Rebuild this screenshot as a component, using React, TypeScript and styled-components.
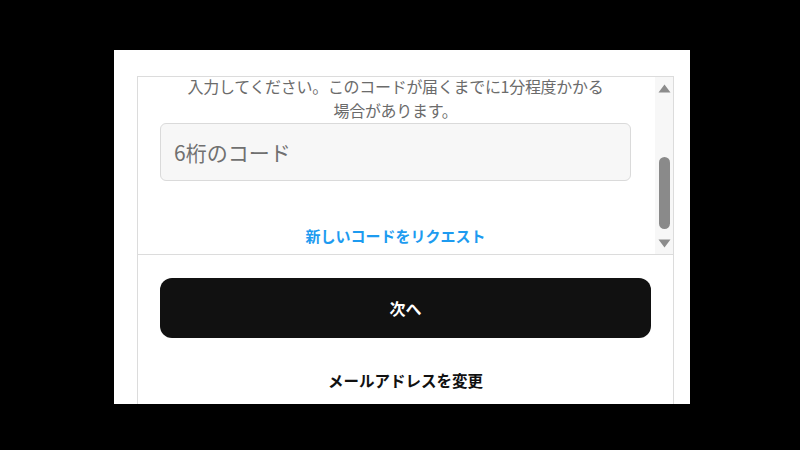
import React, { useLayoutEffect, useRef } from "react";
import styled, { createGlobalStyle } from "styled-components";

const Global = createGlobalStyle`
  html, body { margin: 0; padding: 0; background: #000; }
  body { font-family: "Noto Sans CJK JP", "Noto Sans", sans-serif; }
  * { box-sizing: border-box; }
`;

const Page = styled.div`
  width: 800px;
  height: 450px;
  background: #000;
  padding: 50px 0 0 114px;
  overflow: hidden;
`;

const Panel = styled.div`
  width: 576px;
  height: 354px;
  background: #fff;
  padding: 26px 16px 0 23px;
  display: flex;
  flex-direction: column;
  overflow: hidden;
`;

const Box = styled.div`
  flex: 1;
  border: 1px solid #dcdcdc;
  border-bottom: none;
  display: flex;
  flex-direction: column;
  min-height: 0;
`;

const ScrollRow = styled.div`
  height: 178px;
  flex: none;
  display: flex;
  border-bottom: 1px solid #dcdcdc;
`;

const Viewport = styled.div`
  position: relative;
  flex: 1;
  overflow: hidden;
`;

const Content = styled.div`
  padding: 120px 24px 12px 22px;
`;

const Description = styled.p`
  margin: 0 0 1px 0;
  font-size: 16px;
  line-height: 24px;
  color: #6b6b6b;
  text-align: center;
  letter-spacing: -0.3px;
`;

const Line = styled.span`
  display: block;
  white-space: nowrap;
`;

const CodeInput = styled.input`
  display: block;
  width: 100%;
  height: 58px;
  border: 1px solid #dadada;
  border-radius: 6px;
  background: #f7f7f7;
  padding: 0 13px;
  font-family: "Noto Sans CJK JP", "Noto Sans", sans-serif;
  font-size: 21px;
  color: #222;
  outline: none;
  &::placeholder { color: #707070; }
`;

const LinkRow = styled.div`
  padding-top: 42px;
  text-align: center;
`;

const TextLink = styled.a<{ $tone: "blue" | "dark" }>`
  font-size: ${(p) => (p.$tone === "blue" ? "15px" : "15.5px")};
  line-height: 24px;
  font-weight: 700;
  color: ${(p) => (p.$tone === "blue" ? "#1d9bf0" : "#111")};
  text-decoration: none;
  cursor: pointer;
`;

const ScrollBar = styled.div`
  width: 18px;
  flex: none;
  background: #f7f7f7;
  display: flex;
  flex-direction: column;
`;

const ArrowBtn = styled.div`
  height: 22px;
  flex: none;
  display: flex;
  align-items: center;
  justify-content: center;
`;

const Track = styled.div`
  flex: 1;
  display: flex;
  flex-direction: column;
  align-items: center;
`;

const Thumb = styled.div`
  width: 11px;
  border-radius: 6px;
  background: #8a8a8a;
`;

const Footer = styled.div`
  padding: 23px 22px 0 22px;
  display: flex;
  flex-direction: column;
  align-items: stretch;
`;

const PrimaryButton = styled.button`
  height: 60px;
  border: none;
  border-radius: 12px;
  background: #111;
  color: #fff;
  font-family: "Noto Sans CJK JP", "Noto Sans", sans-serif;
  font-size: 16px;
  font-weight: 700;
  cursor: pointer;
`;

const SecondaryRow = styled.div`
  height: 44px;
  margin-top: 20px;
  display: flex;
  align-items: center;
  justify-content: center;
`;

const Triangle = ({ up }: { up: boolean }) => (
  <svg width="13" height="9" viewBox="0 0 13 9">
    <path d={up ? "M6.5 0.5 L12.5 8.5 L0.5 8.5 Z" : "M0.5 0.5 L12.5 0.5 L6.5 8.5 Z"} fill="#8c8c8c" />
  </svg>
);

const thumb = { top: 58, height: 72 };

export default function App() {
  const viewRef = useRef<HTMLDivElement>(null);
  const lineRef = useRef<HTMLSpanElement>(null);

  useLayoutEffect(() => {
    if (viewRef.current && lineRef.current) {
      viewRef.current.scrollTop = lineRef.current.offsetTop + 3;
    }
  }, []);

  return (
    <>
      <Global />
      <Page>
        <Panel>
          <Box>
            <ScrollRow>
              <Viewport ref={viewRef}>
                <Content>
                  <Description>
                    <Line ref={lineRef}>入力してください。このコードが届くまでに1分程度かかる</Line>
                    <Line>場合があります。</Line>
                  </Description>
                  <CodeInput placeholder="6桁のコード" />
                  <LinkRow>
                    <TextLink $tone="blue">新しいコードをリクエスト</TextLink>
                  </LinkRow>
                </Content>
              </Viewport>
              <ScrollBar>
                <ArrowBtn>
                  <Triangle up />
                </ArrowBtn>
                <Track>
                  <Thumb style={{ marginTop: thumb.top, height: thumb.height }} />
                </Track>
                <ArrowBtn>
                  <Triangle up={false} />
                </ArrowBtn>
              </ScrollBar>
            </ScrollRow>
            <Footer>
              <PrimaryButton>次へ</PrimaryButton>
              <SecondaryRow>
                <TextLink $tone="dark">メールアドレスを変更</TextLink>
              </SecondaryRow>
            </Footer>
          </Box>
        </Panel>
      </Page>
    </>
  );
}
